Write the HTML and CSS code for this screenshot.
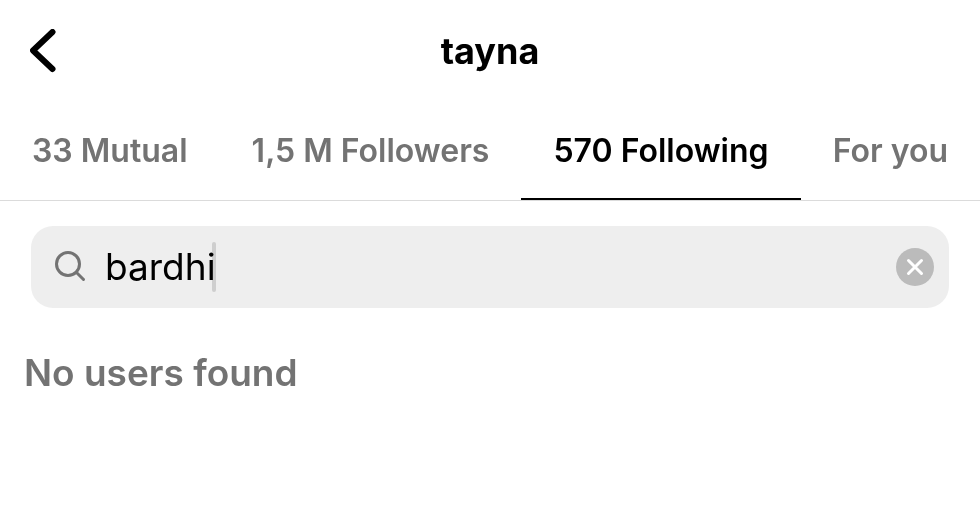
FILE: index.html
```html
<!DOCTYPE html>
<html lang="en">
<head>
    <meta charset="UTF-8">
    <meta name="viewport" content="width=device-width, initial-scale=1.0">
    <title>tayna</title>
    <link rel="stylesheet" href="styles.css">
</head>
<body>
    <header class="header">
        <button class="back" type="button" aria-label="Back">
            <svg width="28" height="44" viewBox="0 0 28 44"><path d="M22.500 3 3 21.500 22.500 40"/></svg>
        </button>
        <h1 class="username">tayna</h1>
    </header>
    <nav class="tabs">
        <a class="tab" href="#mutual">33 Mutual</a>
        <a class="tab" href="#followers">1,5 M Followers</a>
        <a class="tab active" href="#following" aria-current="page">570 Following</a>
        <a class="tab" href="#foryou">For you</a>
    </nav>
    <main class="content">
        <form class="search">
            <svg class="glass" width="32" height="32" viewBox="0 0 32 32"><circle cx="13" cy="13" r="11.500"/><path d="M21.500 21.500 28.500 28.500"/></svg>
            <input class="query" type="text" aria-label="Search" value="bardhi">
            <span class="caret"></span>
            <button class="clear" type="reset" aria-label="Clear">
                <svg width="38" height="38" viewBox="0 0 38 38"><path d="M12.500 12.500 25.500 25.500M25.500 12.500 12.500 25.500"/></svg>
            </button>
        </form>
        <p class="empty">No users found</p>
    </main>
</body>
</html>
```

FILE: styles.css
```css
* {
    box-sizing: border-box;
}
body {
    margin: 0;
    background: #fff;
    color: #000;
    font-family: Inter, sans-serif;
}
svg {
    display: block;
    fill: none;
}
button {
    padding: 0;
    border: 0;
    background: none;
    cursor: pointer;
}
.header {
    display: grid;
    grid-template-columns: 28px 1fr 28px;
    align-items: center;
    height: 101px;
    padding: 0 30px;
}
.back svg {
    stroke: #000;
    stroke-width: 6;
    stroke-linecap: round;
    stroke-linejoin: round;
}
.username {
    margin: 0;
    font-size: 36px;
    font-weight: 700;
    line-height: 44px;
    text-align: center;
}
.tabs {
    display: flex;
    justify-content: space-between;
    height: 100px;
    border-bottom: 1px solid #dbdbdb;
}
.tab {
    height: 99px;
    padding: 0 32px;
    border-bottom: 2px solid transparent;
    color: #737373;
    font-size: 32px;
    font-weight: 600;
    line-height: 100px;
    text-decoration: none;
    white-space: nowrap;
}
.tab.active {
    border-color: #000;
    color: #000;
}
.content {
    padding: 25px 31px;
}
.search {
    display: flex;
    align-items: center;
    height: 82px;
    padding: 0 15px 0 24px;
    border-radius: 22px;
    background: #eee;
}
.glass {
    margin-right: 18px;
    stroke: #737373;
    stroke-width: 3;
    stroke-linecap: round;
}
.query {
    width: auto;
    padding: 0;
    border: 0;
    outline: 0;
    background: none;
    color: #000;
    font: 400 37px/50px Inter, sans-serif;
    field-sizing: content;
}
.caret {
    width: 4px;
    height: 50px;
    margin-left: -4px;
    border-radius: 2px;
    background: #ddd;
    mix-blend-mode: multiply;
}
.clear {
    margin-left: auto;
    border-radius: 50%;
    background: #bbb;
}
.clear svg {
    stroke: #fff;
    stroke-width: 3;
    stroke-linecap: round;
}
.empty {
    margin: 41px -7px 0;
    color: #737373;
    font-size: 37px;
    font-weight: 600;
    line-height: 48px;
}
```
